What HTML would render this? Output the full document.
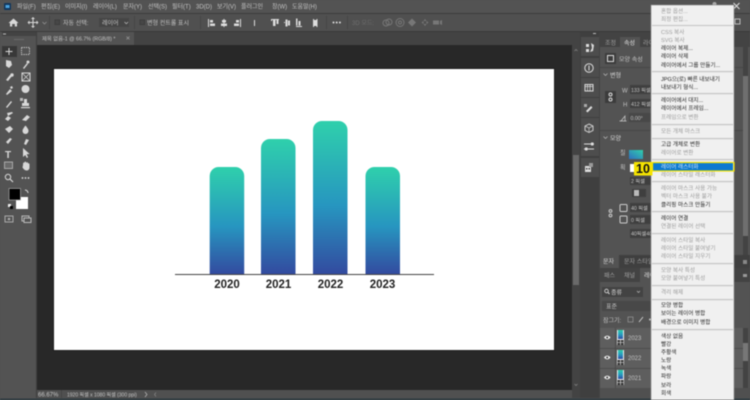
<!DOCTYPE html>
<html lang="ko"><head><meta charset="utf-8"><title>Photoshop</title>
<style>
html,body{margin:0;padding:0;width:750px;height:400px;overflow:hidden;background:#535353}
svg{display:block;filter:blur(.4px)}
text{font-family:"Liberation Sans","Noto Sans CJK KR",sans-serif;font-size:6px;fill:#c4c4c4}
.m text{font-size:5.6px;fill:#1f1f1f}
.m .d{fill:#9c9c9c}
.s{fill:#d8d8d8;stroke:none}
.l{stroke:#d8d8d8;fill:none;stroke-width:1}
</style></head><body>
<svg width="750" height="400" viewBox="0 0 750 400" xmlns="http://www.w3.org/2000/svg">
<defs>
<linearGradient id="g" x1="0" y1="0" x2="0" y2="1"><stop offset="0" stop-color="#2fd0ac"/><stop offset=".55" stop-color="#2796c0"/><stop offset="1" stop-color="#334a9f"/></linearGradient>
<linearGradient id="g2" x1="0" y1="1" x2="1" y2="0"><stop offset="0" stop-color="#2f6fc0"/><stop offset="1" stop-color="#2fd0ac"/></linearGradient>
</defs>
<rect width="750" height="400" fill="#535353"/>
<!-- menu -->
<rect y="13" width="750" height="1" fill="#3c3c3c"/>
<rect x="4" y="3" width="7" height="7" rx="1" fill="#12375c"/><rect x="5.500" y="5" width="4" height="3" fill="#4aa3e0"/>
<g><text x="17" y="8.500">파일(F)</text><text x="41" y="8.500">편집(E)</text><text x="65" y="8.500">이미지(I)</text><text x="93" y="8.500">레이어(L)</text><text x="123" y="8.500">문자(Y)</text><text x="148" y="8.500">선택(S)</text><text x="172" y="8.500">필터(T)</text><text x="196" y="8.500">3D(D)</text><text x="217" y="8.500">보기(V)</text><text x="241" y="8.500">플러그인</text><text x="272" y="8.500">창(W)</text><text x="292" y="8.500">도움말(H)</text></g>
<path d="M733.500 3l6 6M739.500 3l-6 6" stroke="#e0e0e0" fill="none"/><circle cx="714.500" cy="4" r="2" fill="#aaa"/>
<!-- options -->
<rect y="14" width="750" height="17" fill="#505050"/><rect y="31" width="750" height="1" fill="#3a3a3a"/>
<path class="s" d="M13.500 18.500l5 4.500h-1.500v3.500h-2.200v-2.500h-2.600v2.500h-2.200v-3.500h-1.500z"/>
<path class="l" d="M33 18.500v8M29 22.500h8"/><path class="s" d="M33 17l2 2h-4zM33 28l2-2h-4zM27.500 22.500l2-2v4zM38.500 22.500l-2-2v4z"/>
<path d="M42.500 22l2 2 2-2" stroke="#999" fill="none" stroke-width=".7"/>
<rect x="49" y="16" width="1" height="13" fill="#454545"/>
<rect x="55" y="20" width="4.500" height="4.500" fill="#474747" stroke="#3d3d3d"/>
<text x="63" y="25">자동 선택:</text>
<rect x="99" y="18" width="30" height="9" fill="#454545"/><text x="102" y="25">레이어</text><path d="M124.500 22l1.800 1.800 1.800-1.800" stroke="#bbb" fill="none" stroke-width=".7"/>
<rect x="134" y="16" width="1" height="13" fill="#454545"/>
<rect x="140" y="20" width="4.500" height="4.500" fill="#474747" stroke="#3d3d3d"/>
<text x="147" y="25">변형 컨트롤 표시</text>
<rect x="200" y="16" width="1" height="13" fill="#454545"/>
<g fill="#dcdcdc"><path d="M208 19h1v8h-1zM210 20h3v2.500h-3zM210 23.500h5v2.500h-5z"/><path d="M223.500 19h1v8h-1zM222 20h4v2.500h-4zM221 23.500h6v2.500h-6z"/><path d="M240 19h1v8h-1zM236 20h3v2.500h-3zM234 23.500h5v2.500h-5z"/><path d="M254 20h1v6h-1z"/>
<path d="M271 19h1v2h-1zM273 19h2.500v7h-2.500zM276.500 19h2v5h-2zM271 19h8v1h-8z"/><path d="M284 22h1v1h-1zM285.500 19.500h2v7h-2zM288 20.500h2v5h-2z"/><path d="M296 18.500h1.500v7H296zM298.500 21h2v4.500h-2zM296 26h6v1h-6z"/><path d="M313 19h1v8h-1zM316.500 19h1v8h-1zM314 20h2.500v6H314z"/>
<circle cx="333.500" cy="22.500" r="1"/><circle cx="336.700" cy="22.500" r="1"/><circle cx="339.900" cy="22.500" r="1"/></g>
<rect x="326" y="16" width="1" height="13" fill="#454545"/><rect x="347" y="16" width="1" height="13" fill="#454545"/>
<text x="352" y="25" style="fill:#6e6e6e">3D 모드:</text>
<g stroke="#777" fill="none"><circle cx="386" cy="23" r="3"/><circle cx="389" cy="22" r="3"/><circle cx="400" cy="22.500" r="4"/><circle cx="400" cy="22.500" r="1.500"/></g>
<g fill="#777"><path d="M412 18.500l4 4-4 4-4-4z"/><path d="M425 19l1.500 2h-3zM425 26l1.500-2h-3zM421.500 22.500l2-1.500v3zM428.500 22.500l-2-1.500v3z"/><rect x="433" y="20.500" width="6" height="4"/><path d="M440 21l2-1v5l-2-1z"/></g>
<rect x="735" y="19" width="5" height="5" fill="none" stroke="#bbb"/>
<!-- tab bar -->
<rect x="37" y="32" width="543" height="13" fill="#434343"/>
<rect x="37" y="32" width="97" height="13" fill="#535353"/>
<text x="42" y="40.500" style="font-size:5.300px">제목 없음-1 @ 66.7% (RGB/8) *</text>
<path d="M126.500 36.500l3 3M129.500 36.500l-3 3" stroke="#999" stroke-width=".7"/>
<!-- canvas -->
<rect x="37" y="45" width="535" height="345" fill="#282828"/>
<rect x="53" y="68" width="502" height="283" fill="#1f1f1f"/>
<rect x="54" y="69" width="500" height="281" fill="#fff"/>
<path d="M209.700 274.500V176a9 9 0 0 1 9-9h16.500a9 9 0 0 1 9 9v98.500z" fill="url(#g)"/>
<path d="M261 274.500V148a9 9 0 0 1 9-9h16.500a9 9 0 0 1 9 9v126.500z" fill="url(#g)"/>
<path d="M313 274.500V130a9 9 0 0 1 9-9h16.500a9 9 0 0 1 9 9v144.500z" fill="url(#g)"/>
<path d="M365.500 274.500V176a9 9 0 0 1 9-9H391a9 9 0 0 1 9 9v98.500z" fill="url(#g)"/>
<rect x="175" y="274" width="259" height="1" fill="#444"/>
<g text-anchor="middle"><text x="227" y="288" style="font-size:11.500px;font-weight:700;fill:#222">2020</text><text x="278.500" y="288" style="font-size:11.500px;font-weight:700;fill:#222">2021</text><text x="330.500" y="288" style="font-size:11.500px;font-weight:700;fill:#222">2022</text><text x="382.500" y="288" style="font-size:11.500px;font-weight:700;fill:#222">2023</text></g>
<!-- status -->
<rect x="37" y="390" width="535" height="9" fill="#505050"/><rect y="398.500" width="750" height="1.500" fill="#2d3a40"/>
<text x="38" y="396.500">66.67%</text><rect x="61" y="390" width="1" height="8" fill="#444"/>
<text x="67" y="396.500" style="font-size:5px">1920 픽셀 x 1080 픽셀 (300 ppi)</text>
<path d="M145 392l2 2.500-2 2.500" stroke="#bbb" fill="none" stroke-width=".7"/><path d="M156 392.500l-1.500 2 1.500 2" stroke="#888" fill="none" stroke-width=".7"/>
<!-- tools -->
<rect x="0" y="32" width="36" height="366" fill="#535353"/><rect x="36" y="32" width="1" height="366" fill="#3f3f3f"/>
<rect x="2" y="32" width="34" height="4" fill="#434343"/><rect x="3" y="33.500" width="3" height="1" fill="#bbb"/>
<rect x="14" y="39" width="10" height="1" fill="#6a6a6a"/>
<rect x="2" y="46" width="15" height="11" fill="#383838"/>
<path class="l" d="M9 48v7M5.500 51.500h7"/><rect x="21.500" y="47.500" width="8" height="7" fill="none" stroke="#ccc" stroke-dasharray="1.200 1"/>
<g fill="#d8d8d8">
<path d="M6 60l5 1 1 4-3 3-3-2z"/><path d="M23 68l4-5 1 1-4 5z"/><circle cx="28" cy="62" r="1.500"/>
<path d="M6 80l4-5 2 1-4 5z"/><circle cx="12" cy="75" r="1.700"/><rect x="22" y="73" width="8" height="8" fill="none" stroke="#d8d8d8"/><path d="M22 73l8 8M30 73l-8 8" stroke="#d8d8d8" stroke-width=".7"/>
<path d="M6 94l4-5 2 2-5 4z"/><path d="M10 87l2-1 1 2-2 1z"/><circle cx="25.500" cy="89" r="4"/>
<path d="M6 107l5-6 1 1-5 6z"/><rect x="24" y="99" width="3" height="4"/><rect x="22" y="103" width="7" height="3"/><rect x="21" y="107" width="9" height="1.200"/><rect x="20" y="98" width="3" height="3" fill="#bbb"/>
<path d="M5 119l3-3 3 2-3 3z"/><path d="M7 113l5-1 1 1-5 3z"/><path d="M22 120l5-5 3 2-4 4z"/>
<path d="M5 129l5-3 3 3-4 4z"/><path d="M25.500 125.500c2 2.500 3 4 3 5.500a3 3 0 0 1-6 0c0-1.500 1-3 3-5.500z"/>
<path d="M6 142l4-4 2 1-4 5z"/><path d="M24 144l2-5 3 1-3 5z"/>
</g>
<text x="5" y="158" style="font-size:10px;font-weight:700;fill:#d8d8d8">T</text>
<path class="s" d="M23 148v9l2.300-2 1.500 3 1.300-.7-1.500-3 3-.3z"/>
<rect x="4.500" y="162" width="8" height="6.500" fill="#6a6a6a" stroke="#bbb" stroke-width=".8"/>
<path class="s" d="M23 165c0-3 1-3 1.500-2 0-2 1.500-2 1.800 0 .5-1 1.700-1 1.700.5.500-.5 1.500-.2 1.500 1v3c0 2-1.500 3-3 3s-3-1.500-4-3z"/>
<circle cx="8" cy="177" r="2.700" fill="none" stroke="#d8d8d8"/><path d="M10 179l3 3" stroke="#d8d8d8" stroke-width="1.200"/>
<circle cx="22.500" cy="178" r=".9" fill="#ddd"/><circle cx="25.500" cy="178" r=".9" fill="#ddd"/><circle cx="28.500" cy="178" r=".9" fill="#ddd"/>
<rect x="16" y="197" width="12" height="12" fill="#fff"/>
<rect x="9" y="188.500" width="11.500" height="11.500" fill="#000" stroke="#aaa" stroke-width=".7"/>
<path d="M25 190a3 3 0 0 1 3 3" stroke="#ddd" fill="none"/><rect x="8" y="204" width="3" height="3" fill="#eee"/><rect x="10" y="206" width="3" height="3" fill="#000"/>
<rect x="5" y="216" width="8" height="6" fill="none" stroke="#aaa"/><circle cx="9" cy="219" r="1.300" fill="#aaa"/>
<rect x="22" y="216" width="7" height="5" fill="none" stroke="#bbb"/><rect x="24" y="218" width="7" height="4.500" fill="#535353" stroke="#bbb"/>
<!-- canvas scrollbar -->
<rect x="572" y="45" width="8" height="353" fill="#434343"/><path d="M574.500 51l1.500-1.500 1.500 1.500" stroke="#888" fill="none" stroke-width=".7"/>
<rect x="573" y="155" width="6" height="130" fill="#6a6a6a"/>
<path d="M574.500 384l1.500 1.500 1.500-1.500" stroke="#888" fill="none" stroke-width=".7"/>
<!-- dock -->
<rect x="580" y="32" width="170" height="366" fill="#434343"/>
<rect x="580" y="32" width="19" height="366" fill="#3f3f3f"/>
<rect x="593" y="33" width="3" height="1" fill="#bbb"/>
<g fill="#4d4d4d"><rect x="581" y="37" width="18" height="19"/><rect x="581" y="58" width="18" height="19"/><rect x="581" y="78" width="18" height="19"/><rect x="581" y="98" width="18" height="19"/><rect x="581" y="118" width="18" height="19"/><rect x="581" y="137" width="18" height="19"/><rect x="581" y="158" width="18" height="19"/></g>
<g fill="#ddd"><rect x="586" y="44" width="3" height="3"/><rect x="586" y="49" width="3" height="3"/><path d="M591 43l3 2-1 6-3 1 2-4z"/></g>
<circle cx="589" cy="68" r="4.200" fill="none" stroke="#ddd"/><rect x="588.500" y="65.500" width="1" height="5" fill="#ddd"/>
<rect x="585" y="84.500" width="8" height="6.500" fill="none" stroke="#ddd"/><path d="M585 86.500h8M587.500 84.500v6.500M590 84.500v6.500" stroke="#ddd" stroke-width=".7"/>
<path d="M586 111l5-5 1.500 1.500-5 5z" fill="#ddd"/><rect x="584" y="104" width="3" height="3" fill="#aaa"/>
<path d="M589 124l4 2v4.500l-4 2-4-2V126z" fill="none" stroke="#ccc"/><path d="M585 126l4 2 4-2M589 128v4.500" stroke="#ccc" fill="none" stroke-width=".7"/>
<path d="M584 144h10M584 149h10" stroke="#ddd"/><rect x="591" y="142.500" width="2.500" height="3" fill="#ddd"/><rect x="585" y="147.500" width="2.500" height="3" fill="#ddd"/>
<rect x="585" y="166" width="6" height="6" fill="#ddd"/><rect x="589" y="163" width="4" height="4" fill="#999"/><rect x="586" y="168" width="1.500" height="1.500" fill="#444"/><rect x="588.500" y="168" width="1.500" height="1.500" fill="#444"/>
<!-- properties panel -->
<rect x="600" y="37" width="150" height="10" fill="#434343"/><rect x="600" y="47" width="150" height="208" fill="#535353"/>
<rect x="620" y="37" width="20" height="10" fill="#535353"/>
<text x="605" y="45" style="fill:#a0a0a0">조정</text><text x="624" y="45" style="fill:#e0e0e0">속성</text><text x="643" y="45" style="fill:#a0a0a0">라이</text>
<rect x="605" y="53" width="11" height="11" fill="#3c3c3c"/><rect x="607.500" y="55.500" width="6" height="6" fill="none" stroke="#ddd"/>
<text x="619" y="61.500">모양 속성</text>
<rect x="600" y="67" width="143" height=".8" fill="#444"/>
<path d="M603.500 73.500l2 2 2-2" stroke="#bbb" fill="none" stroke-width=".7"/><text x="610" y="77.500" style="fill:#ddd">변형</text>
<rect x="605" y="91" width="11" height="12" fill="#3c3c3c"/><circle cx="610.500" cy="94.500" r="1.500" fill="none" stroke="#ddd"/><circle cx="610.500" cy="99.500" r="1.500" fill="none" stroke="#ddd"/>
<text x="622" y="92.500">W</text><rect x="630" y="85" width="21" height="9" fill="#3f3f3f"/><text x="631" y="92" style="font-size:5.200px">133 픽셀</text>
<text x="623" y="106.500">H</text><rect x="630" y="99" width="21" height="9" fill="#3f3f3f"/><text x="631" y="106" style="font-size:5.200px">412 픽셀</text>
<path d="M621 121l4-5v5zM619.500 121h7" stroke="#ccc" fill="none" stroke-width=".7"/><rect x="629" y="113" width="22" height="9" fill="#484848"/><text x="630.500" y="120" style="font-size:5.200px">0.00°</text>
<rect x="600" y="130" width="143" height=".8" fill="#444"/>
<path d="M603.500 136.500l2 2 2-2" stroke="#bbb" fill="none" stroke-width=".7"/><text x="610" y="140.500" style="fill:#ddd">모양</text>
<text x="620" y="155">칠</text><rect x="629" y="150" width="14" height="9" fill="url(#g2)"/>
<text x="620" y="169.500">획</text><rect x="630" y="164" width="5" height="8" fill="#fff"/>
<rect x="630" y="177" width="21" height="8" fill="#3f3f3f"/><text x="631" y="183" style="font-size:5.200px">2 픽셀</text>
<rect x="632" y="189" width="14" height="8" fill="#3f3f3f"/><rect x="634" y="190" width="5" height="6" fill="#bbb"/>
<rect x="620" y="204.500" width="7" height="7" rx="1" fill="none" stroke="#ccc"/><rect x="630" y="203" width="21" height="9" fill="#3f3f3f"/><text x="631" y="210" style="font-size:5.200px">40 픽셀</text>
<rect x="620" y="216" width="7" height="7" rx="1" fill="none" stroke="#ccc"/><rect x="630" y="215" width="21" height="9" fill="#3f3f3f"/><text x="631" y="222" style="font-size:5.200px">0 픽셀</text>
<circle cx="610.500" cy="211" r="1.400" fill="none" stroke="#ccc"/><circle cx="610.500" cy="215.500" r="1.400" fill="none" stroke="#ccc"/>
<rect x="630" y="229" width="21" height="9" fill="#3f3f3f"/><text x="631" y="235.500" style="font-size:5.200px">40픽셀40픽셀</text>
<rect x="743" y="47" width="5" height="208" fill="#434343"/><rect x="743" y="76" width="5" height="160" fill="#6f6f6f"/>
<!-- character tabs -->
<rect x="600" y="255" width="150" height="13" fill="#3f3f3f"/><rect x="600" y="255" width="19" height="13" fill="#535353"/>
<text x="603" y="263.500" style="fill:#ddd">문자</text><text x="624" y="263.500" style="fill:#a0a0a0">문자 스타일</text>
<rect x="743" y="260" width="4" height="4" fill="#888"/>
<!-- layers panel -->
<rect x="600" y="268" width="150" height="130" fill="#535353"/><rect x="600" y="268" width="150" height="14" fill="#434343"/><rect x="640" y="268" width="14" height="14" fill="#535353"/>
<text x="604" y="277.500" style="fill:#a0a0a0">패스</text><text x="624" y="277.500" style="fill:#a0a0a0">채널</text><text x="644" y="277.500" style="fill:#ddd">레이</text>
<rect x="743" y="274" width="4" height="3" fill="#999"/>
<rect x="602" y="287" width="41" height="10" fill="#434343"/><circle cx="606.500" cy="291" r="1.800" fill="none" stroke="#ddd" stroke-width=".8"/><path d="M608 292.500l1.500 1.500" stroke="#ddd"/><text x="611" y="294.500" style="fill:#ddd">종류</text><path d="M637 291l1.500 1.500 1.500-1.500" stroke="#bbb" fill="none" stroke-width=".7"/>
<rect x="602" y="301" width="50" height="10" fill="#484848"/><text x="606" y="308.500">표준</text>
<text x="603" y="322.500">잠그기:</text><rect x="628" y="317" width="5" height="5" fill="none" stroke="#999" stroke-width=".7"/><path d="M639 322l4-5" stroke="#ccc"/><circle cx="650" cy="319.500" r="1" fill="#ccc"/>
<rect x="600" y="328" width="143" height="60" fill="#5e5e5e"/><rect x="600" y="348" width="143" height=".8" fill="#484848"/><rect x="600" y="368" width="143" height=".8" fill="#484848"/><rect x="615" y="328" width=".8" height="60" fill="#484848"/>
<g fill="#eee"><path d="M604 337.500c2-2.500 4.500-2.500 6.500 0-2 2.500-4.500 2.500-6.500 0z"/><path d="M604 357.500c2-2.500 4.500-2.500 6.500 0-2 2.500-4.500 2.500-6.500 0z"/><path d="M604 377.500c2-2.500 4.500-2.500 6.500 0-2 2.500-4.500 2.500-6.500 0z"/></g>
<g fill="#3a3a3a"><circle cx="607.200" cy="337.500" r="1"/><circle cx="607.200" cy="357.500" r="1"/><circle cx="607.200" cy="377.500" r="1"/></g>
<rect x="617" y="330" width="7" height="15" fill="#eee"/><rect x="618" y="330" width="5" height="9" fill="url(#g)"/><rect x="617.500" y="340" width="6" height="5" fill="#333"/><path d="M620.500 340v5M617.500 342.500h6" stroke="#eee" stroke-width=".6"/>
<rect x="617" y="350" width="7" height="15" fill="#eee"/><rect x="618" y="350" width="5" height="9" fill="url(#g)"/><rect x="617.500" y="360" width="6" height="5" fill="#333"/><path d="M620.500 360v5M617.500 362.500h6" stroke="#eee" stroke-width=".6"/>
<rect x="617" y="370" width="7" height="15" fill="#eee"/><rect x="618" y="370" width="5" height="9" fill="url(#g)"/><rect x="617.500" y="380" width="6" height="5" fill="#333"/><path d="M620.500 380v5M617.500 382.500h6" stroke="#eee" stroke-width=".6"/>
<text x="628" y="340">2023</text><text x="628" y="360">2022</text><text x="628" y="380">2021</text>
<rect x="743" y="328" width="5" height="60" fill="#434343"/><rect x="743" y="343" width="5" height="18" fill="#777"/>
<rect x="600" y="388" width="150" height="10" fill="#505050"/>
<!-- context menu -->
<rect x="651" y="5" width="83" height="395" fill="#f0f0f0" stroke="#8a8a8a" stroke-width=".6"/>
<g fill="#c4c4c4"><rect x="652" y="25" width="81" height="1"/><rect x="652" y="71" width="81" height="1.200"/><rect x="652" y="93" width="81" height="1.200"/><rect x="652" y="124" width="81" height="1.200"/><rect x="652" y="138" width="81" height="1.200"/><rect x="652" y="159" width="81" height="1.200"/><rect x="652" y="181" width="81" height="1.200"/><rect x="652" y="211" width="81" height="1.200"/><rect x="652" y="233" width="81" height="1.200"/><rect x="652" y="263" width="81" height="1.200"/><rect x="652" y="285" width="81" height="1.200"/><rect x="652" y="299" width="81" height="1.200"/><rect x="652" y="329" width="81" height="1.200"/></g>
<rect x="652" y="163" width="81" height="7.500" fill="#0b79d0"/>
<rect x="652.500" y="162.500" width="81.500" height="8.500" fill="none" stroke="#f5e400" stroke-width="1.200"/>
<rect x="634" y="162" width="18.500" height="13.500" fill="#f5e400"/>
<text x="636" y="173" style="font-size:12.500px;font-weight:700;fill:#111">10</text>
<g class="m">
<text class="d" x="661" y="13">혼합 옵션...</text>
<text class="d" x="661" y="21">죄정 편집...</text>
<text class="d" x="661" y="34">CSS 복사</text>
<text class="d" x="661" y="42">SVG 복사</text>
<text x="661" y="50">레이어 복제...</text>
<text x="661" y="58">레이어 삭제</text>
<text x="661" y="67">레이어에서 그룹 만들기...</text>
<text x="661" y="81">JPG으(로) 빠른 내보내기</text>
<text x="661" y="89">내보내기 형식...</text>
<text x="661" y="102">레이어에서 대지...</text>
<text x="661" y="110">레이어에서 프레임...</text>
<text class="d" x="661" y="119">프레임으로 변환</text>
<text class="d" x="661" y="133">모든 개체 마스크</text>
<text x="661" y="146">고급 개체로 변환</text>
<text class="d" x="661" y="154.500">레이어로 변환</text>
<text x="661" y="168.500" style="fill:#cfe6fa">레이어 래스터화</text>
<text class="d" x="661" y="176.500">레이어 스타일 래스터화</text>
<text class="d" x="661" y="190">레이어 마스크 사용 가능</text>
<text class="d" x="661" y="198">벡터 마스크 사용 불가</text>
<text x="661" y="206.500">클리핑 마스크 만들기</text>
<text x="661" y="220">레이어 연결</text>
<text class="d" x="661" y="228">연결된 레이어 선택</text>
<text class="d" x="661" y="242">레이어 스타일 복사</text>
<text class="d" x="661" y="250">레이어 스타일 붙여넣기</text>
<text class="d" x="661" y="258">레이어 스타일 지우기</text>
<text class="d" x="661" y="272">모양 복사 특성</text>
<text class="d" x="661" y="280">모양 붙여넣기 특성</text>
<text class="d" x="661" y="294">격리 해제</text>
<text x="661" y="307">모양 병합</text>
<text x="661" y="315">보이는 레이어 병합</text>
<text x="661" y="324">배경으로 이미지 병합</text>
<text x="661" y="338">색상 없음</text>
<text x="661" y="346">빨강</text>
<text x="661" y="354">주황색</text>
<text x="661" y="362">노랑</text>
<text x="661" y="370">녹색</text>
<text x="661" y="378">파랑</text>
<text x="661" y="387">보라</text>
<text x="661" y="395">회색</text>
</g>
</svg>
</body></html>
